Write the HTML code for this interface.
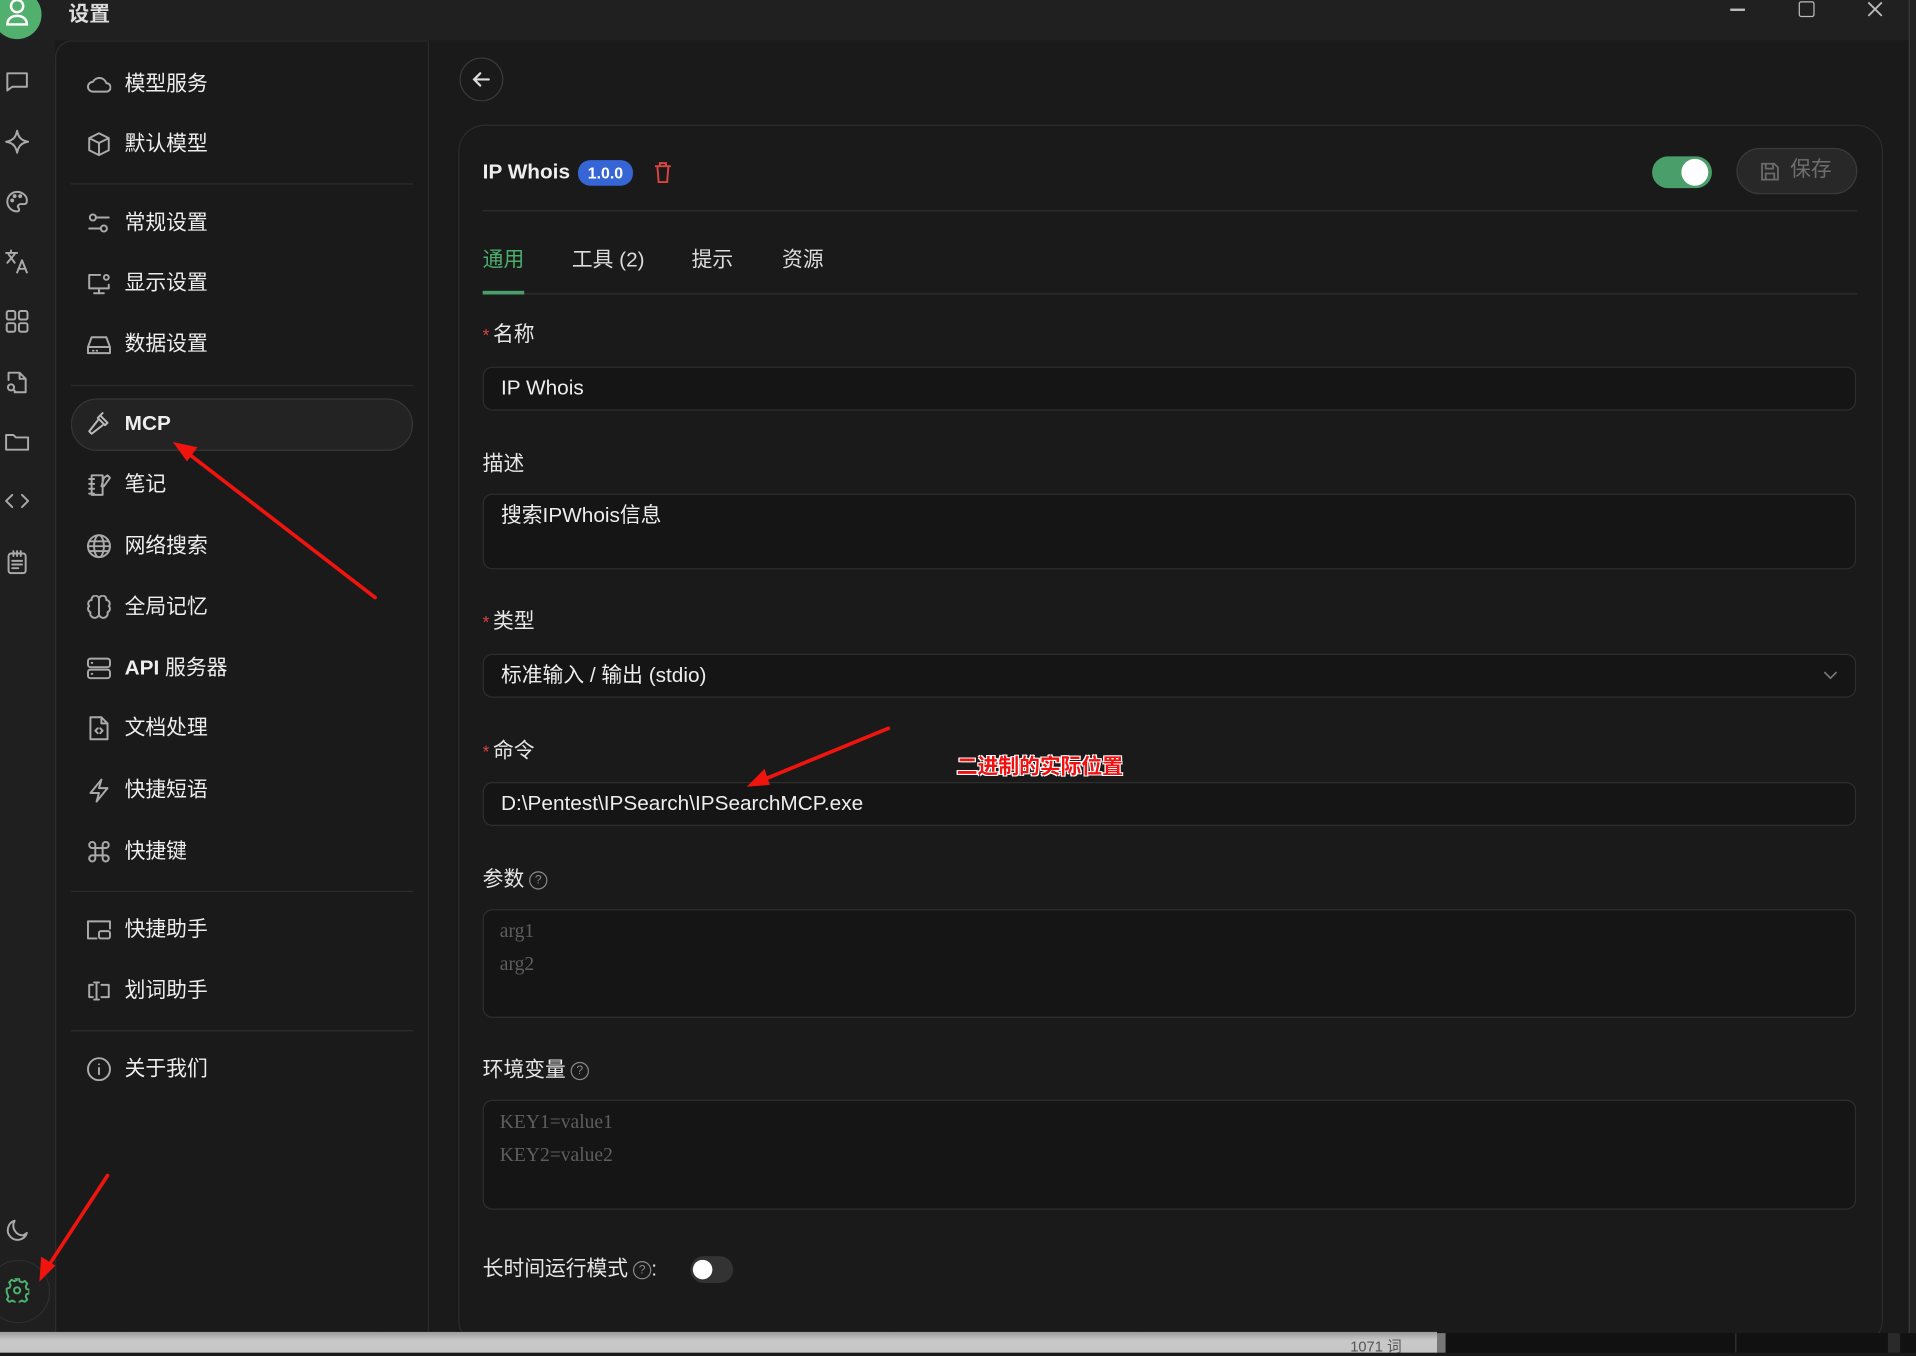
<!DOCTYPE html>
<html><head><meta charset="utf-8">
<style>
html,body{margin:0;padding:0;width:1916px;height:1353px;overflow:hidden;background:#1a1a1a;}
#s{position:absolute;left:0;top:0;width:1568px;height:1107px;transform:scale(1.22194);transform-origin:0 0;font-family:"Liberation Sans","Noto Sans CJK SC",sans-serif;color:#e6e6e6;background:#1a1a1a;}
.a{position:absolute;}
.ic{position:absolute;width:20px;height:20px;fill:none;stroke:#aaa;stroke-width:1.6;stroke-linecap:round;stroke-linejoin:round;}
.nav{position:absolute;left:102px;font-size:17px;color:#eee;line-height:20px;}
.div{position:absolute;left:58px;width:280px;height:1px;background:#2c2c2c;}
.lbl{position:absolute;left:395px;font-size:17px;color:#e6e6e6;line-height:20px;}
.lbl b{color:#d44;font-weight:normal;font-size:14px;margin-right:3px;}
.inp{position:absolute;left:395px;width:1124px;background:#151515;border:1px solid #2e2e2e;border-radius:8px;box-sizing:border-box;}
.inp span{position:absolute;left:14px;font-size:17px;color:#eee;}
.mono{font-family:"Liberation Serif","DejaVu Serif",serif;color:#5e5e5e;font-size:16px;position:absolute;left:13px;}
.q{display:inline-block;width:13px;height:13px;border:1.3px solid #888;border-radius:50%;font-size:10px;line-height:13px;text-align:center;color:#888;vertical-align:2px;margin-left:4px;}
</style></head><body>
<div id="s">
<div class="a" style="left:0;top:0;width:1562px;height:33px;background:#202020;"></div>
<div class="a" style="left:0;top:33px;width:45px;height:1058px;background:#1f1f1f;"></div>
<div class="a" style="left:1562px;top:0;width:6px;height:1091px;background:#222;border-left:1px solid #3a3a3a;"></div>
<div class="a" style="left:-6px;top:-8px;width:40px;height:40px;border-radius:50%;background:#52b06f;"></div>
<svg class="a" style="left:4px;top:-2px" width="22" height="30" viewBox="0 0 22 30" fill="none" stroke="#fff" stroke-width="2"><circle cx="10" cy="7" r="5"/><path d="M2 22c0-5 4-7 8-7s8 2 8 7z"/></svg>
<div class="a" style="left:56px;top:-3px;font-size:17px;font-weight:bold;color:#ddd;">设置</div>
<div class="a" style="left:1416px;top:7px;width:12px;height:1.5px;background:#bbb;"></div>
<div class="a" style="left:1472px;top:1px;width:11px;height:11px;border:1.5px solid #bbb;border-radius:2px;"></div>
<svg class="a" style="left:1528px;top:1px" width="13" height="13" stroke="#bbb" stroke-width="1.5"><path d="M1 1L12 12M12 1L1 12"/></svg>

<svg class="ic" style="left:4px;top:57px" viewBox="0 0 20 20"><path d="M2 3h16v11H6l-4 3z"/></svg>
<svg class="ic" style="left:4px;top:106px" viewBox="0 0 20 20"><path d="M10 1c1 5 3 8 9 9-6 1-8 4-9 9-1-5-3-8-9-9 6-1 8-4 9-9z"/></svg>
<svg class="ic" style="left:4px;top:155px" viewBox="0 0 20 20"><path d="M10 2a8 8 0 1 0 0 16c2 0 2-2 1-3s0-3 2-3h3c2 0 2-2 2-3 0-4-4-7-8-7z"/><circle cx="6" cy="9" r=".8"/><circle cx="8" cy="5.5" r=".8"/><circle cx="12.5" cy="5.5" r=".8"/></svg>
<svg class="ic" style="left:4px;top:204px" viewBox="0 0 20 20"><path d="M1 3h9M5 1v2M3 4l5 7M8 4l-6 7M10 19l4-10 4 10M11 16h6"/></svg>
<svg class="ic" style="left:4px;top:253px" viewBox="0 0 20 20"><rect x="1.5" y="1.5" width="7" height="7" rx="1.5"/><rect x="11.5" y="1.5" width="7" height="7" rx="1.5"/><rect x="1.5" y="11.5" width="7" height="7" rx="1.5"/><rect x="11.5" y="11.5" width="7" height="7" rx="1.5"/></svg>
<svg class="ic" style="left:4px;top:303px" viewBox="0 0 20 20"><path d="M3 8V2h9l5 5v11H8M12 2v5h5"/><circle cx="5" cy="14" r="2.5"/><path d="M7 16l2 2"/></svg>
<svg class="ic" style="left:4px;top:351px" viewBox="0 0 20 20"><path d="M1 5h6l2 2h10v10H1z"/></svg>
<svg class="ic" style="left:4px;top:400px" viewBox="0 0 20 20"><path d="M6 5l-5 5 5 5M14 5l5 5-5 5"/></svg>
<svg class="ic" style="left:4px;top:450px" viewBox="0 0 20 20"><rect x="3" y="3" width="14" height="16" rx="2"/><path d="M7 1v4M10 1v4M13 1v4M6 9h8M6 12h8M6 15h5"/></svg>
<svg class="ic" style="left:4px;top:997px" viewBox="0 0 20 20"><path d="M15 14A8 8 0 0 1 8 2a8 8 0 1 0 10 10z"/></svg>
<div class="a" style="left:-11px;top:1031px;width:50px;height:50px;border-radius:50%;border:1px solid #2e2e2e;"></div>
<svg class="ic" style="left:4px;top:1046px;stroke:#4fb36f" viewBox="0 0 20 20"><circle cx="10" cy="10" r="2.5"/><path d="M8.5 1.5h3l.5 2.5 2 1 2.3-1.2 2 2.2-1.2 2.3.5 2 2.4.7v3l-2.4.7-.5 2 1.2 2.3-2 2-2.3-1.2-2 1-.5 2.5h-3l-.5-2.5-2-1-2.3 1.2-2-2 1.2-2.3-.8-2L1.5 13v-3l2.4-.7.8-2L3.5 5l2-2.2 2.3 1.2 2-1z" transform="translate(0,-1.5)"/></svg>

<div class="a" style="left:45px;top:33px;width:306px;height:1070px;border-left:1px solid #2c2c2c;border-top:1px solid #2c2c2c;border-right:1px solid #2c2c2c;border-radius:14px 0 0 0;box-sizing:border-box;background:#1a1a1a;"></div>
<div class="a" style="left:58px;top:326px;width:280px;height:43px;border-radius:22px;background:#232323;border:1px solid #363636;box-sizing:border-box;"></div>
<div class="div" style="top:150px"></div><div class="div" style="top:315px"></div><div class="div" style="top:729px"></div><div class="div" style="top:843px"></div>

<svg class="ic" style="left:71px;top:59px" viewBox="0 0 20 20"><path d="M5 16a4 4 0 0 1 0-8 6 6 0 0 1 11 1 3.5 3.5 0 0 1 0 7z"/></svg><div class="nav" style="top:59px">模型服务</div>
<svg class="ic" style="left:71px;top:108px" viewBox="0 0 20 20"><path d="M10 1l8 4v10l-8 4-8-4V5zM2 5l8 4 8-4M10 9v10"/></svg><div class="nav" style="top:108px">默认模型</div>
<svg class="ic" style="left:71px;top:173px" viewBox="0 0 20 20"><circle cx="5" cy="5" r="2.5"/><circle cx="14" cy="14" r="2.5"/><path d="M8 5h10M2 14h9"/></svg><div class="nav" style="top:173px">常规设置</div>
<svg class="ic" style="left:71px;top:222px" viewBox="0 0 20 20"><path d="M11 3H2v11h16v-3M10 14v4M6 18h8"/><circle cx="16" cy="5" r="2"/></svg><div class="nav" style="top:222px">显示设置</div>
<svg class="ic" style="left:71px;top:272px" viewBox="0 0 20 20"><path d="M1 12l3-8h12l3 8v5H1zM1 12h18M5 15h.5M8 15h.5"/></svg><div class="nav" style="top:272px">数据设置</div>
<svg class="ic" style="left:71px;top:337px;stroke:#bbb" viewBox="0 0 20 20"><path d="M11 3l6 6-2 2-6-6zM9 7L2 16l2 2 9-7M11 3l2-2"/></svg><div class="nav" style="top:337px;font-weight:bold">MCP</div>
<svg class="ic" style="left:71px;top:387px" viewBox="0 0 20 20"><path d="M4 2h9v16H4zM2 5h4M2 9h4M2 13h4M2 17h4M14 4l3-2 2 2-5 7h-2z"/></svg><div class="nav" style="top:387px">笔记</div>
<svg class="ic" style="left:71px;top:437px" viewBox="0 0 20 20"><circle cx="10" cy="10" r="9"/><ellipse cx="10" cy="10" rx="4" ry="9"/><path d="M1 10h18M2 6h16M2 14h16"/></svg><div class="nav" style="top:437px">网络搜索</div>
<svg class="ic" style="left:71px;top:487px" viewBox="0 0 20 20"><path d="M10 3a3 3 0 0 0-6 1 3 3 0 0 0-2 5 3 3 0 0 0 1 5 3 3 0 0 0 7 2zM10 3a3 3 0 0 1 6 1 3 3 0 0 1 2 5 3 3 0 0 1-1 5 3 3 0 0 1-7 2V3"/></svg><div class="nav" style="top:487px">全局记忆</div>
<svg class="ic" style="left:71px;top:537px" viewBox="0 0 20 20"><rect x="1" y="2" width="18" height="7" rx="2"/><rect x="1" y="11" width="18" height="7" rx="2"/><path d="M4 5.5h.5M4 14.5h.5"/></svg><div class="nav" style="top:537px"><b>API</b> 服务器</div>
<svg class="ic" style="left:71px;top:586px" viewBox="0 0 20 20"><path d="M3 1h9l5 5v13H3zM12 1v5h5M9 10l-2 2 2 2M11 10l2 2-2 2"/></svg><div class="nav" style="top:586px">文档处理</div>
<svg class="ic" style="left:71px;top:637px" viewBox="0 0 20 20"><path d="M12 1L3 12h7l-2 7 9-11h-7z"/></svg><div class="nav" style="top:637px">快捷短语</div>
<svg class="ic" style="left:71px;top:687px" viewBox="0 0 20 20"><path d="M7 7h6v6H7zM7 7V4.5A2.5 2.5 0 1 0 4.5 7H7M13 7V4.5A2.5 2.5 0 1 1 15.5 7H13M7 13v2.5A2.5 2.5 0 1 1 4.5 13H7M13 13v2.5a2.5 2.5 0 1 0 2.5-2.5H13"/></svg><div class="nav" style="top:687px">快捷键</div>
<svg class="ic" style="left:71px;top:751px" viewBox="0 0 20 20"><path d="M8 17H1V3h18v6"/><rect x="10" y="11" width="9" height="6" rx="1.5"/></svg><div class="nav" style="top:751px">快捷助手</div>
<svg class="ic" style="left:71px;top:801px" viewBox="0 0 20 20"><path d="M5 5H2v10h3M12 5h6v10h-6M6 3h4M6 17h4M8 3v14"/></svg><div class="nav" style="top:801px">划词助手</div>
<svg class="ic" style="left:71px;top:865px" viewBox="0 0 20 20"><circle cx="10" cy="10" r="9"/><path d="M10 9v5M10 6h.01"/></svg><div class="nav" style="top:865px">关于我们</div>

<div class="a" style="left:376px;top:47px;width:36px;height:36px;border-radius:50%;border:1px solid #3a3a3a;box-sizing:border-box;"></div>
<svg class="a" style="left:386px;top:57px" width="16" height="16" fill="none" stroke="#ddd" stroke-width="1.8" stroke-linecap="round"><path d="M14 8H2M7 3L2 8l5 5"/></svg>
<div class="a" style="left:375px;top:102px;width:1166px;height:1000px;border:1px solid #2c2c2c;border-radius:22px;box-sizing:border-box;"></div>

<div class="a" style="left:395px;top:131px;font-size:17px;font-weight:bold;color:#eee;">IP Whois</div>
<div class="a" style="left:473px;top:131px;width:45px;height:21px;border-radius:10px;background:#3666d6;color:#fff;font-size:13px;font-weight:bold;text-align:center;line-height:21px;">1.0.0</div>
<svg class="a" style="left:535px;top:132px" width="15" height="18" fill="none" stroke="#d9443f" stroke-width="1.6"><path d="M1 4h13M5 4V1.5h5V4M3 4l1 13h7l1-13"/></svg>
<div class="a" style="left:1352px;top:128px;width:49px;height:26px;border-radius:13px;background:#4a9e6a;"></div>
<div class="a" style="left:1376px;top:130px;width:22px;height:22px;border-radius:50%;background:#fff;"></div>
<div class="a" style="left:1421px;top:121px;width:99px;height:38px;border-radius:19px;background:#282828;border:1px solid #3a3a3a;box-sizing:border-box;"></div>
<svg class="a" style="left:1441px;top:133px" width="15" height="15" fill="none" stroke="#6a6a6a" stroke-width="1.5"><path d="M1 1h10l3 3v10H1zM4 1v4h6V1M4 14V9h7v5"/></svg>
<div class="a" style="left:1465px;top:129px;font-size:17px;line-height:20px;color:#6e6e6e;">保存</div>
<div class="a" style="left:395px;top:172px;width:1125px;height:1px;background:#303030;"></div>

<div class="a" style="left:395px;top:203px;font-size:17px;line-height:20px;color:#4caf6e;">通用</div>
<div class="a" style="left:468px;top:203px;font-size:17px;line-height:20px;color:#ddd;">工具 (2)</div>
<div class="a" style="left:566px;top:203px;font-size:17px;line-height:20px;color:#ddd;">提示</div>
<div class="a" style="left:640px;top:203px;font-size:17px;line-height:20px;color:#ddd;">资源</div>
<div class="a" style="left:395px;top:240px;width:1125px;height:1px;background:#303030;"></div>
<div class="a" style="left:395px;top:238px;width:34px;height:3px;background:#4a9e6a;"></div>

<div class="lbl" style="top:264px"><b>*</b>名称</div>
<div class="inp" style="top:300px;height:36px"><span style="top:7px;line-height:20px">IP Whois</span></div>
<div class="lbl" style="top:370px">描述</div>
<div class="inp" style="top:404px;height:62px"><span style="top:7px;line-height:20px">搜索IPWhois信息</span></div>
<div class="lbl" style="top:499px"><b>*</b>类型</div>
<div class="inp" style="top:535px;height:36px"><span style="top:7px;line-height:20px">标准输入 / 输出 (stdio)</span>
<svg class="a" style="left:1096px;top:13px" width="12" height="8" fill="none" stroke="#777" stroke-width="1.4"><path d="M1 1l5 5 5-5"/></svg></div>
<div class="lbl" style="top:605px"><b>*</b>命令</div>
<div class="inp" style="top:640px;height:36px"><span style="top:7px;line-height:20px">D:\Pentest\IPSearch\IPSearchMCP.exe</span></div>
<div class="lbl" style="top:710px">参数<span class="q">?</span></div>
<div class="inp" style="top:744px;height:89px"><div class="mono" style="top:9px">arg1</div><div class="mono" style="top:36px">arg2</div></div>
<div class="lbl" style="top:866px">环境变量<span class="q">?</span></div>
<div class="inp" style="top:900px;height:90px"><div class="mono" style="top:9px">KEY1=value1</div><div class="mono" style="top:36px">KEY2=value2</div></div>
<div class="lbl" style="top:1029px">长时间运行模式<span class="q">?</span>:</div>
<div class="a" style="left:565px;top:1028px;width:35px;height:22px;border-radius:11px;background:#333;"></div>
<div class="a" style="left:567px;top:1031px;width:16px;height:16px;border-radius:50%;background:#fff;"></div>

<svg class="a" style="left:0;top:0" width="1568" height="1107" fill="none" stroke="#f0140e" stroke-width="3" stroke-linecap="round">
<path d="M307 489L150 368"/><path d="M145 364l14 3-6 8z" fill="#f0140e"/>
<path d="M727 596L620 640"/><path d="M615 642l10-10 3 9z" fill="#f0140e"/>
<path d="M88 962L37 1040"/><path d="M34 1045l1-14 8 5z" fill="#f0140e"/>
</svg>
<div class="a" style="left:783px;top:613px;font-size:17px;font-weight:bold;color:#f01010;text-shadow:1px 1px 0 #fff,-1px -1px 0 #fff,1px -1px 0 #fff,-1px 1px 0 #fff;">二进制的实际位置</div>

<div class="a" style="left:0;top:1091px;width:1568px;height:16px;background:#111;"></div>
<div class="a" style="left:0;top:1090px;width:1176px;height:17px;background:linear-gradient(#9a9a9a,#c8c8c8 40%,#c6c6c6);"></div>
<div class="a" style="left:1176px;top:1091px;width:7px;height:16px;background:#777;"></div>
<div class="a" style="left:1105px;top:1093px;font-size:12px;color:#555;">1071 词</div>
<div class="a" style="left:1420px;top:1091px;width:1px;height:16px;background:#333;"></div>
<div class="a" style="left:1545px;top:1091px;width:10px;height:16px;background:#2a2a2a;"></div>
</div>
</body></html>
